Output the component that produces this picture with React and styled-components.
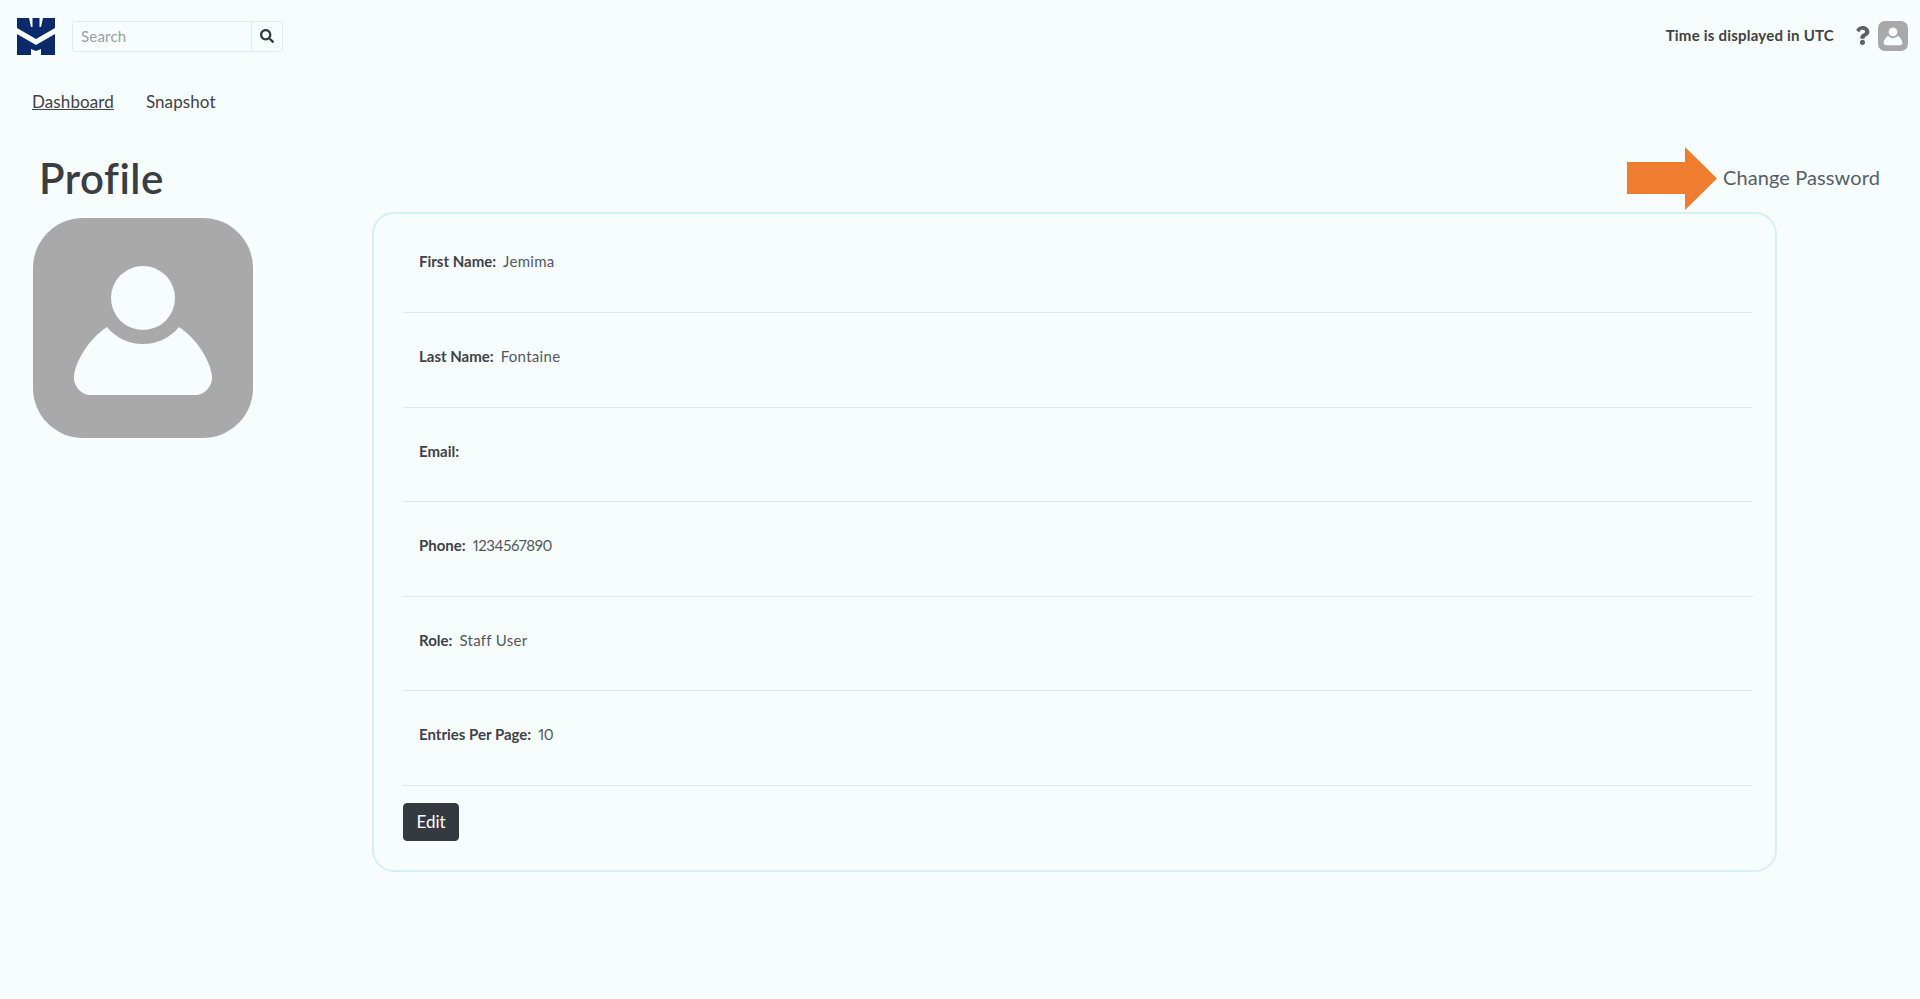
import React from 'react'
import styled, { createGlobalStyle } from 'styled-components'
import { FaSearch, FaQuestion } from 'react-icons/fa'

const GlobalStyle = createGlobalStyle`
  html, body {
    margin: 0;
    padding: 0;
    background: #f7fcfd;
    font-family: "Lato", "Open Sans", sans-serif;
    color: #3a3d42;
  }
  * { box-sizing: border-box; }
`

const Page = styled.div`
  position: relative;
  width: 1920px;
  height: 999px;
  overflow: hidden;
`

const Header = styled.header`
  display: flex;
  align-items: center;
  justify-content: space-between;
  height: 72px;
  padding: 0 12px 0 17px;
`

const HeaderSide = styled.div`
  display: flex;
  align-items: center;
`

const SearchBox = styled.form`
  display: flex;
  height: 31px;
  margin-left: 17px;
`

const SearchInput = styled.input`
  width: 180px;
  height: 100%;
  padding: 0 8px;
  font: 15px "Lato", sans-serif;
  letter-spacing: 0.2px;
  color: #3a3d42;
  background: transparent;
  border: 1px solid #d4f0f5;
  border-radius: 3px 0 0 3px;
  outline: none;

  &::placeholder { color: #9b9fa3; }
`

const SearchButton = styled.button`
  display: flex;
  align-items: center;
  justify-content: center;
  width: 31px;
  height: 100%;
  padding: 0;
  font-size: 14px;
  color: #343a40;
  background: transparent;
  border: 1px solid #d4f0f5;
  border-left-width: 0;
  border-radius: 0 3px 3px 0;
`

const TimeNote = styled.span`
  margin-bottom: 2px;
  font-size: 15px;
  font-weight: 700;
  letter-spacing: 0.22px;
  color: #3f4247;
`

const HelpIcon = styled(FaQuestion)`
  width: 15px;
  height: 19px;
  margin: 0 8px 2px 21px;
  color: #5f6163;
`

const SmallAvatar = styled.div`
  display: flex;
  align-items: center;
  justify-content: center;
  width: 30px;
  height: 30px;
  background: #a9a9a9;
  border-radius: 7px;
`

const Nav = styled.nav`
  display: flex;
  gap: 32px;
  padding: 0 0 0 32px;
  margin-top: 17px;
  height: 24px;
  align-items: center;
`

const NavLink = styled.a`
  font-size: 17px;
  letter-spacing: 0.1px;
  color: #3f4247;
  text-decoration: ${(p) => (p.$active ? 'underline' : 'none')};
`

const TitleRow = styled.div`
  display: flex;
  align-items: center;
  justify-content: space-between;
  height: 64px;
  margin-top: 34px;
  padding: 0 40px 0 39px;
`

const Title = styled.h1`
  margin: 0 0 2px;
  font-size: 42px;
  font-weight: 600;
  letter-spacing: 0.5px;
  font-variant-ligatures: none;
  color: #3a3d42;
`

const ChangePassword = styled.a`
  margin-bottom: 4px;
  font-size: 20px;
  letter-spacing: 0.1px;
  color: #565e6a;
`

const Arrow = styled.svg`
  position: absolute;
  left: 1627px;
  top: 147px;
`

const Content = styled.main`
  display: flex;
  align-items: flex-start;
  padding-left: 33px;
  margin-top: 1px;
`

const ProfileImage = styled.div`
  flex: none;
  width: 220px;
  height: 220px;
  margin: 6px 119px 0 0;
  background: #a9a9a9;
  border-radius: 50px;
  display: flex;
  align-items: center;
  justify-content: center;
`

const Card = styled.section`
  width: 1405px;
  height: 660px;
  padding: 0 22px 0 29px;
  border: 2px solid #d4f0f5;
  border-radius: 22px;
`

const Row = styled.div`
  display: flex;
  align-items: flex-start;
  height: 94.6px;
  padding: 34px 0 0 16px;
  font-size: 15px;
  line-height: 18px;
  border-bottom: 1px solid #dde8ea;

  &:first-child {
    height: 99px;
    padding-top: 38px;
  }
`

const Label = styled.strong`
  font-weight: 700;
  color: #3f4247;
  margin-right: 7px;
`

const Value = styled.span`
  font-variant-numeric: proportional-nums;
  letter-spacing: ${(p) => (p.$numeric ? '-0.4px' : '0.3px')};
  color: #53585f;
`

const EditButton = styled.button`
  display: block;
  width: 56px;
  height: 38px;
  margin-top: 17px;
  padding: 0;
  font: 17px "Lato", sans-serif;
  color: #fff;
  background: #343a40;
  border: 1px solid #343a40;
  border-radius: 4px;
`

const rows = [
  ['First Name:', 'Jemima'],
  ['Last Name:', 'Fontaine'],
  ['Email:', ''],
  ['Phone:', '1234567890'],
  ['Role:', 'Staff User'],
  ['Entries Per Page:', '10'],
]

const Logo = () => (
  <svg width="38" height="37" viewBox="0 0 38 37">
    <path
      fill="#0b2a6b"
      d="M0 0H12L14 9H15.5V0H22.5V9H24L26 0H38V10L19 21 0 10ZM0 16L19 27 38 16V37H24V31L19 33 14 31V37H0Z"
    />
  </svg>
)

const PersonIcon = ({ size }) => (
  <svg width={size} height={size} viewBox="0 0 220 220">
    <circle cx="110" cy="80" r="32" fill="#f7fcfd" />
    <path
      fill="#f7fcfd"
      d="M74 109c9 11 22 17 36 17s27-6 36-17c18 12 31 33 33 49 1 9-7 19-16 19H57c-9 0-17-10-16-19 2-16 15-37 33-49z"
    />
  </svg>
)

const App = () => (
  <Page>
    <GlobalStyle />
    <Header>
      <HeaderSide>
        <Logo />
        <SearchBox>
          <SearchInput placeholder="Search" />
          <SearchButton type="button">
            <FaSearch />
          </SearchButton>
        </SearchBox>
      </HeaderSide>
      <HeaderSide>
        <TimeNote>Time is displayed in UTC</TimeNote>
        <HelpIcon />
        <SmallAvatar>
          <PersonIcon size={30} />
        </SmallAvatar>
      </HeaderSide>
    </Header>
    <Nav>
      <NavLink $active>Dashboard</NavLink>
      <NavLink>Snapshot</NavLink>
    </Nav>
    <TitleRow>
      <Title>Profile</Title>
      <ChangePassword>Change Password</ChangePassword>
    </TitleRow>
    <Arrow width="90" height="63" viewBox="0 0 90 63">
      <path fill="#ee7d30" d="M0 15h58V0l32 31.5L58 63V47H0z" />
    </Arrow>
    <Content>
      <ProfileImage>
        <PersonIcon size={220} />
      </ProfileImage>
      <Card>
        {rows.map(([label, value]) => (
          <Row key={label}>
            <Label>{label}</Label>
            <Value $numeric={/^\d+$/.test(value)}>{value}</Value>
          </Row>
        ))}
        <EditButton>Edit</EditButton>
      </Card>
    </Content>
  </Page>
)

export default App
